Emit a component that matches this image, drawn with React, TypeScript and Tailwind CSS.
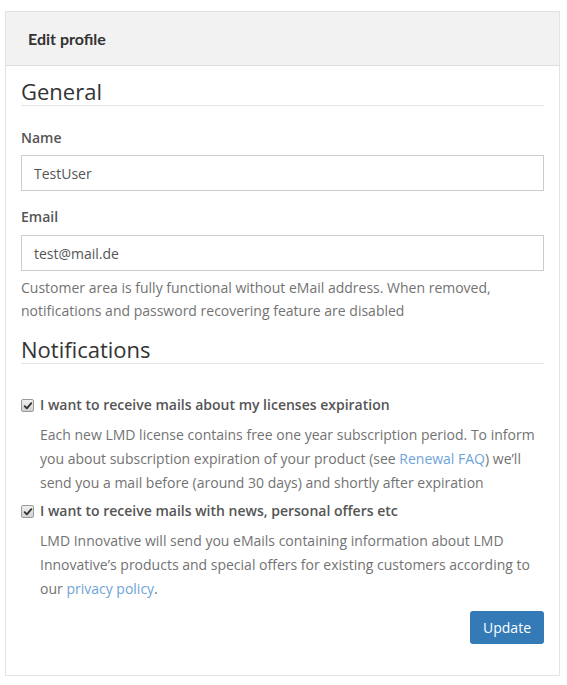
import { useState } from "react";

function CheckBox({ checked, onToggle }: { checked: boolean; onToggle: () => void }) {
  return (
    <button
      type="button"
      onClick={onToggle}
      className="mt-[4px] flex h-[13px] w-[13px] shrink-0 items-center justify-center rounded-[2px] border border-[#9a9a9a] bg-gradient-to-b from-[#f0f0f0] to-[#d2d2d2]"
    >
      {checked && (
        <svg viewBox="0 0 12 12" className="h-[10px] w-[10px]">
          <path d="M2 6.2 L4.6 8.8 L10 2.6" fill="none" stroke="#333" strokeWidth="2.2" strokeLinecap="round" strokeLinejoin="round" />
        </svg>
      )}
    </button>
  );
}

export default function App() {
  const [name, setName] = useState("TestUser");
  const [email, setEmail] = useState("test@mail.de");
  const [expiry, setExpiry] = useState(true);
  const [news, setNews] = useState(true);

  return (
    <div className="min-h-screen bg-white pl-[5px] pt-[11px] font-['Open_Sans',sans-serif] text-[14px] text-[#555]">
      <div className="w-[555px] border border-[#e3e3e3] bg-white">
        <div className="flex h-[54px] items-center border-b border-[#dedede] bg-[#f2f2f2] pl-[22px]">
          <h2 className="font-['Lato',sans-serif] text-[16px] font-bold text-[#333]">Edit profile</h2>
        </div>

        <div className="px-[15px] pb-[31px]">
          <h3 className="mt-[12px] border-b border-[#e5e5e5] pb-[1px] text-[22px] leading-[26px] text-[#333]">General</h3>

          <label className="mt-[22px] block font-semibold leading-[20px]">Name</label>
          <input
            value={name}
            onChange={(e) => setName(e.target.value)}
            className="mt-[7px] block h-[36px] w-full border border-[#ccc] px-[12px] text-[#555] outline-none"
          />

          <label className="mt-[16px] block font-semibold leading-[20px]">Email</label>
          <input
            value={email}
            onChange={(e) => setEmail(e.target.value)}
            className="mt-[8px] block h-[36px] w-full border border-[#ccc] px-[12px] text-[#555] outline-none"
          />
          <p className="mt-[5px] leading-[23px] text-[#737373]">
            Customer area is fully functional without eMail address. When removed, notifications and password recovering feature are disabled
          </p>

          <h3 className="mt-[14px] border-b border-[#e5e5e5] pb-[1px] text-[22px] leading-[26px] text-[#333]">Notifications</h3>

          <div className="mt-[31px] flex gap-[6px]">
            <CheckBox checked={expiry} onToggle={() => setExpiry(!expiry)} />
            <div>
              <div className="font-semibold leading-[20px]">I want to receive mails about my licenses expiration</div>
              <p className="mt-[8px] leading-[24px] text-[#737373]">
                Each new LMD license contains free one year subscription period. To inform you about subscription expiration of your product (see{" "}
                <a href="#" className="text-[#6fa3d9]">Renewal FAQ</a>) we’ll send you a mail before (around 30 days) and shortly after expiration
              </p>
            </div>
          </div>

          <div className="mt-[6px] flex gap-[6px]">
            <CheckBox checked={news} onToggle={() => setNews(!news)} />
            <div>
              <div className="font-semibold leading-[20px]">I want to receive mails with news, personal offers etc</div>
              <p className="mt-[8px] leading-[24px] text-[#737373]">
                LMD Innovative will send you eMails containing information about LMD Innovative’s products and special offers for existing customers according to our{" "}
                <a href="#" className="text-[#6fa3d9]">privacy policy</a>.
              </p>
            </div>
          </div>

          <div className="mt-[10px] flex justify-end">
            <button className="h-[33px] rounded-[3px] bg-[#337ab7] px-[13px] text-[14px] text-white">Update</button>
          </div>
        </div>
      </div>
    </div>
  );
}
